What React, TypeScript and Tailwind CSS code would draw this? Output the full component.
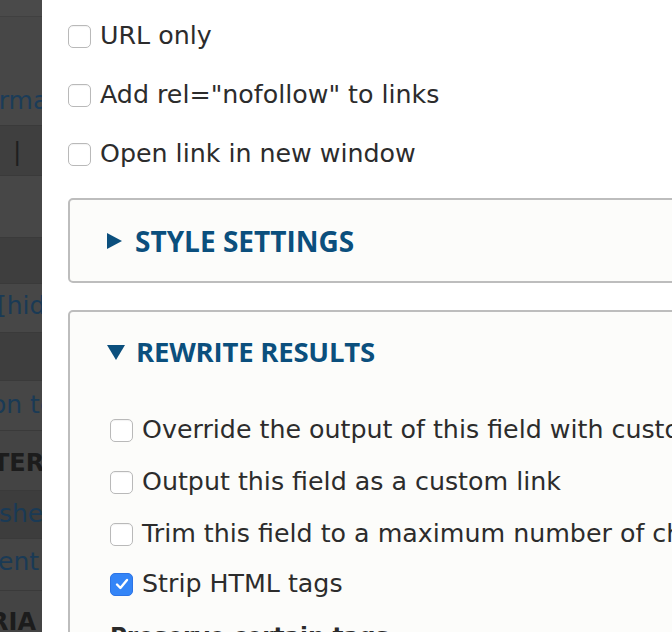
import React from "react";

const Box = ({ checked = false }: { checked?: boolean }) =>
  checked ? (
    <span className="flex h-[23px] w-[23px] shrink-0 items-center justify-center rounded-[5px] border border-[#2c74e6] bg-[#3485f7]">
      <svg width="14" height="12" viewBox="0 0 14 12">
        <path d="M2 6.5 L5.4 10 L12 2" fill="none" stroke="#fff" strokeWidth="2.4" strokeLinecap="round" strokeLinejoin="round" />
      </svg>
    </span>
  ) : (
    <span className="block h-[23px] w-[23px] shrink-0 rounded-[5px] border border-[#b9b9b9] bg-white shadow-[inset_0_1px_1px_rgba(0,0,0,0.05)]" />
  );

const Row = ({ label, checked = false, h }: { label: string; checked?: boolean; h: string }) => (
  <div className={`flex items-center gap-[9px] whitespace-nowrap ${h}`}>
    <Box checked={checked} />
    <span className="mt-[-2px] leading-[25px]">{label}</span>
  </div>
);

export default function App() {
  const font = { fontFamily: '"DejaVu Sans", sans-serif' };
  return (
    <div className="flex h-[632px] w-[672px] overflow-hidden bg-white text-[25.3px] text-[#2c2c2c]" style={font}>
      {/* background page behind overlay */}
      <div className="flex w-[42px] shrink-0 flex-col overflow-hidden whitespace-nowrap bg-[#454545] text-[25px] leading-[25px]">
        <div className="h-[17px] border-b border-[#404040] bg-[#4a4a4a]" />
        <div className="h-[108px] bg-[#474747] pt-[71px] text-[#1b3c58]">
          <span className="ml-[-30px] block">Format</span>
        </div>
        <div className="h-[50px] border-t border-[#3a3a3a] bg-[#3f3f3f] pt-[13px] text-[#1f1f1f]">
          <span className="ml-[13px] block">|</span>
        </div>
        <div className="h-[62px] border-t border-[#3a3a3a] bg-[#474747]" />
        <div className="h-[46px] border-t border-[#3a3a3a] bg-[#3e3e3e]" />
        <div className="h-[49px] border-t border-[#3a3a3a] bg-[#474747] pt-[9px] text-[#1a3a55]">
          <span className="ml-[-3px] block">[hide</span>
        </div>
        <div className="h-[48px] border-t border-[#3a3a3a] bg-[#3e3e3e]" />
        <div className="h-[50px] border-t border-[#3a3a3a] bg-[#464646] pt-[11px] text-[#1a3a55]">
          <span className="ml-[-9px] block">on text</span>
        </div>
        <div className="h-[60px] border-t border-[#3a3a3a] bg-[#444444] pt-[20px] font-bold text-[#1c1c1c]">
          <span className="ml-[-7px] block text-[24px]">TERIA</span>
        </div>
        <div className="h-[48px] border-t border-[#3a3a3a] bg-[#3d3d3d] pt-[10px] text-[#1a3a55]">
          <span className="ml-[-1px] block">shed</span>
        </div>
        <div className="h-[52px] border-t border-[#3a3a3a] bg-[#454545] pt-[10px] text-[#1a3a55]">
          <span className="ml-[-2px] block">ent to</span>
        </div>
        <div className="h-[42px] border-t border-[#3a3a3a] bg-[#444444] pt-[19px] font-bold text-[#1c1c1c]">
          <span className="ml-[-10px] block text-[24px]">RIA</span>
        </div>
      </div>

      {/* modal */}
      <div className="min-w-0 flex-1 overflow-hidden bg-white pl-[26px] pt-[7px]">
        <div className="w-[700px]">
          <Row label="URL only" h="h-[59px]" />
          <Row label='Add rel="nofollow" to links' h="h-[59px]" />
          <Row label="Open link in new window" h="h-[59px]" />

          <div className="mt-[14px] flex h-[85px] items-center rounded-[5px] border-2 border-[#bdbdbd] bg-[#fcfcfa] pl-[37px]">
            <svg width="15" height="16" viewBox="0 0 15 16" className="mr-[13px] shrink-0">
              <path d="M0 0 L15 8 L0 16 Z" fill="#0b4f7d" />
            </svg>
            <span className="text-[28px] font-bold leading-[28px] text-[#0b4f7d]" style={{ fontFamily: '"Open Sans", sans-serif' }}>
              STYLE SETTINGS
            </span>
          </div>

          <div className="mt-[27px] rounded-[5px] border-2 border-[#bdbdbd] bg-[#fcfcfa] pl-[40px]">
            <div className="flex h-[80px] items-center">
              <svg width="18" height="15" viewBox="0 0 18 15" className="ml-[-3px] mr-[11px] shrink-0">
                <path d="M0 0 L18 0 L9 15 Z" fill="#0b4f7d" />
              </svg>
              <span className="text-[27.5px] font-bold leading-[28px] tracking-[-0.2px] text-[#0b4f7d]" style={{ fontFamily: '"Open Sans", sans-serif' }}>
                REWRITE RESULTS
              </span>
            </div>
            <div className="pt-[12px]">
              <Row label="Override the output of this field with custom text" h="h-[52px]" />
              <Row label="Output this field as a custom link" h="h-[52px]" />
              <Row label="Trim this field to a maximum number of characters" h="h-[52px]" />
              <Row label="Strip HTML tags" checked h="h-[48px]" />
              <div className="pt-[16px] text-[23px] font-bold leading-[25px] text-[#2a2a2a]">Preserve certain tags</div>
              <div className="h-[80px]" />
            </div>
          </div>
        </div>
      </div>
    </div>
  );
}
